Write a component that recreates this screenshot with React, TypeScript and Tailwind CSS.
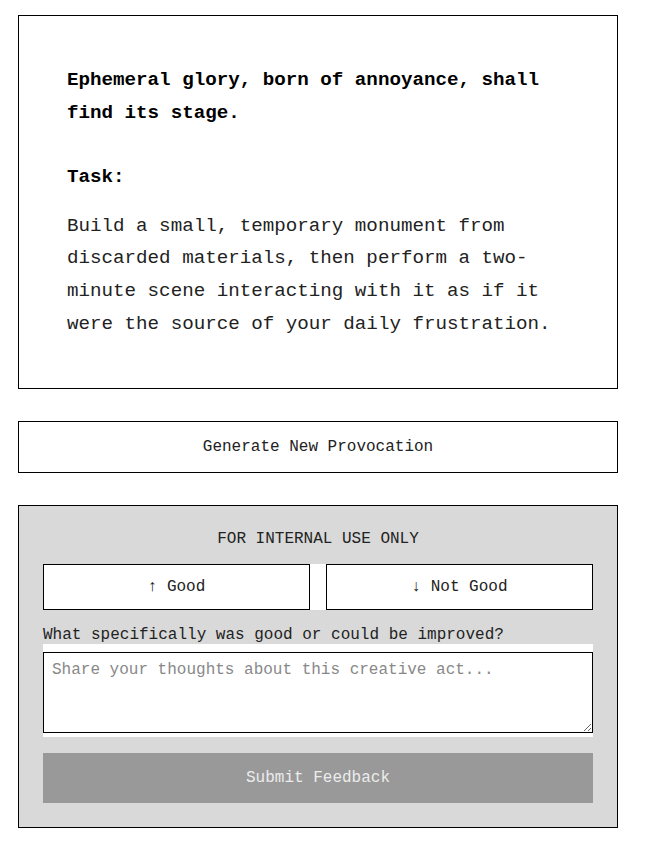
import { useState } from 'react';

const mono = { fontFamily: '"Liberation Mono", "Courier New", monospace' };

export default function App() {
  const [feedback, setFeedback] = useState('');
  const [rating, setRating] = useState<'good' | 'bad' | null>(null);

  return (
    <div className="min-h-[845px] bg-white pl-[18px] pt-[15px] text-black" style={mono}>
      <div className="flex w-[600px] flex-col gap-8">
        {/* Provocation card */}
        <div className="border border-black p-12">
          <h1 className="mb-8 text-[19.2px] font-bold leading-[32.6px]">
            Ephemeral glory, born of annoyance, shall find its stage.
          </h1>
          <h2 className="mb-4 text-[19.2px] font-bold leading-[32.6px]">Task:</h2>
          <p className="text-[19.2px] leading-[32.6px] text-[#222]">
            Build a small, temporary monument from discarded materials, then perform a two-minute scene
            interacting with it as if it were the source of your daily frustration.
          </p>
        </div>

        <button className="h-[52px] w-full border border-black bg-white text-[16px] text-[#222]">
          Generate New Provocation
        </button>

        {/* Internal feedback */}
        <div className="border border-black bg-[#d9d9d9] p-6">
          <div className="mb-4 text-center text-[16px] leading-[18px] text-[#222]">FOR INTERNAL USE ONLY</div>
          <div className="flex gap-4 bg-white">
            <button
              onClick={() => setRating('good')}
              className="h-[46px] flex-1 border border-black bg-white text-[16px] text-[#222]"
            >
              ↑ Good
            </button>
            <button
              onClick={() => setRating('bad')}
              className="h-[46px] flex-1 border border-black bg-white text-[16px] text-[#222]"
            >
              ↓ Not Good
            </button>
          </div>
          <div className="mt-4 text-[16px] leading-[18px] text-[#222]">
            What specifically was good or could be improved?
          </div>
          <div className="bg-white pb-[4px] pt-2">
            <textarea
              value={feedback}
              onChange={(e) => setFeedback(e.target.value)}
              placeholder="Share your thoughts about this creative act..."
              className="block h-[81px] w-full border border-black bg-white px-2 py-2 text-[16px] leading-[19px] placeholder:text-[#888]"
              style={mono}
            />
          </div>
          <button
            disabled={!rating || !feedback.trim()}
            className="mt-4 h-[50px] w-full bg-[#999999] text-[16px] text-[#ececec]"
          >
            Submit Feedback
          </button>
        </div>
      </div>
    </div>
  );
}
